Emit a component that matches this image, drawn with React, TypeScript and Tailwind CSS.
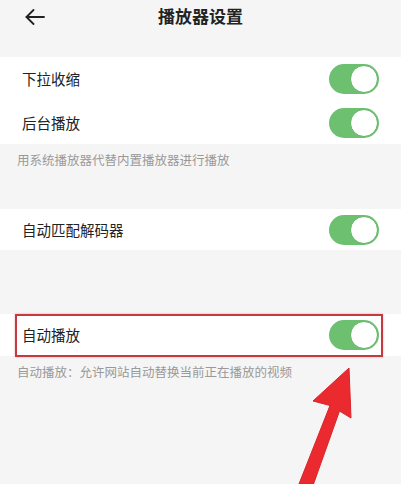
function Toggle() {
  return (
    <div className="relative h-[30px] w-[50px] rounded-full bg-[#6cc070]">
      <div className="absolute right-[1px] top-[1px] h-[28px] w-[28px] rounded-full border border-[#5eb362] bg-white" />
    </div>
  );
}

function Row({ label, className = "" }: { label: string; className?: string }) {
  return (
    <div className={`flex items-center justify-between bg-white pl-[22px] pr-[22px] ${className}`}>
      <span className="text-[14.5px] text-[#222]">{label}</span>
      <Toggle />
    </div>
  );
}

function Note({ text }: { text: string }) {
  return (
    <div className="flex h-[32px] items-center pl-[17px] text-[12.5px] text-[#999]">{text}</div>
  );
}

export default function App() {
  return (
    <div
      className="relative h-[484px] w-[401px] overflow-hidden bg-[#f5f5f5]"
      style={{ fontFamily: '"Noto Sans CJK SC", "Noto Sans", sans-serif' }}
    >
      <header className="h-[57px]">
        <div className="relative flex h-[32px] items-center justify-center">
          <svg className="absolute left-[25px] top-[9px]" width="20" height="16" viewBox="0 0 20 16" fill="none" stroke="#222" strokeWidth="1.8" strokeLinecap="round" strokeLinejoin="round">
            <path d="M1.5 8H19" />
            <path d="M8.5 1 1.5 8l7 7" />
          </svg>
          <h1 className="text-[17px] font-bold text-[#222]">播放器设置</h1>
        </div>
      </header>

      <div className="bg-white">
        <Row label="下拉收缩" className="h-[44px]" />
        <Row label="后台播放" className="h-[43px]" />
      </div>
      <Note text="用系统播放器代替内置播放器进行播放" />

      <div className="h-[33px]" />
      <Row label="自动匹配解码器" className="h-[41px]" />

      <div className="h-[64px]" />
      <div className="relative">
        <Row label="自动播放" className="h-[42px]" />
        <div className="pointer-events-none absolute left-[15px] right-[18px] top-0 bottom-[-1px] border-2 border-[#c63a3f] shadow-[0_0_2px_rgba(198,58,63,0.4)]" />
      </div>
      <Note text="自动播放：允许网站自动替换当前正在播放的视频" />

      <svg className="absolute left-0 top-0" width="401" height="484" viewBox="0 0 401 484">
        <path
          d="M349 368 313 401 330 405.5 299 484 313.5 484 339.5 411 351 418Z"
          fill="#ea2a2f"
          stroke="#d9242a"
          strokeWidth="1"
          strokeLinejoin="round"
        />
      </svg>
    </div>
  );
}
